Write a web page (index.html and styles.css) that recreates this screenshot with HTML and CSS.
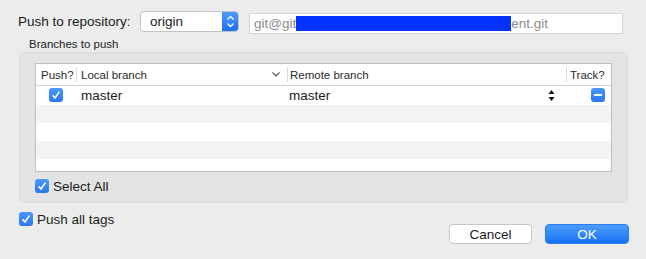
FILE: index.html
```html
<!doctype html>
<html>
	<head>
		<title>Push</title>
		<link rel="stylesheet" href="styles.css">
	</head>
	<body>
		<div class="dialog">
			<div class="repo-row">
				<span class="repo-label">Push to repository:</span>
				<div class="popup">
					<span class="popup-value">origin</span>
					<span class="popup-stepper">
						<svg width="17" height="21" viewBox="0 0 17 21"><polyline points="5.5,8.5 8.5,5.5 11.5,8.5" fill="none" stroke="white" stroke-width="1.3"/><polyline points="5.5,12.5 8.5,15.5 11.5,12.5" fill="none" stroke="white" stroke-width="1.3"/></svg>
					</span>
				</div>
				<div class="url-field"><span>git@git</span><span class="redact"></span><span>ent.git</span></div>
			</div>

			<div class="group-title">Branches to push</div>

			<div class="group">
				<div class="branch-table">
					<div class="thead">
						<div class="col col-push">Push?</div>
						<div class="col col-local">Local branch
							<svg class="sort" width="8" height="5" viewBox="0 0 8 5"><polyline points="0.5,0.5 4,4 7.5,0.5" fill="none" stroke="#555" stroke-width="1.1"/></svg>
						</div>
						<div class="col col-remote">Remote branch</div>
						<div class="col col-track">Track?</div>
					</div>
					<div class="tbody">
						<div class="row">
							<div class="col col-push"><span class="checkbox"><svg width="14" height="14" viewBox="0 0 14 14"><polyline points="3.6,7.4 6,10 10.4,3.6" fill="none" stroke="white" stroke-width="1.6"/></svg></span></div>
							<div class="col col-local">master</div>
							<div class="col col-remote">master
								<svg class="updown" width="7" height="13" viewBox="0 0 7 13"><polygon points="3.5,1 6.5,5 0.5,5" fill="#111"/><polygon points="3.5,12 6.5,8 0.5,8" fill="#111"/></svg>
							</div>
							<div class="col col-track"><span class="minus"></span></div>
						</div>
						<div class="row alt"></div>
						<div class="row"></div>
						<div class="row alt"></div>
						<div class="row"></div>
					</div>
				</div>
				<div class="check-row">
					<span class="checkbox"><svg width="14" height="14" viewBox="0 0 14 14"><polyline points="3.6,7.4 6,10 10.4,3.6" fill="none" stroke="white" stroke-width="1.6"/></svg></span>
					<span>Select All</span>
				</div>
			</div>

			<div class="footer">
				<div class="check-row tags">
					<span class="checkbox"><svg width="14" height="14" viewBox="0 0 14 14"><polyline points="3.6,7.4 6,10 10.4,3.6" fill="none" stroke="white" stroke-width="1.6"/></svg></span>
					<span>Push all tags</span>
				</div>
				<div class="buttons">
					<button class="btn">Cancel</button>
					<button class="btn btn-default">OK</button>
				</div>
			</div>
		</div>
	</body>
</html>
```

FILE: styles.css
```css
body {
	margin: 0;
	background: #ececec;
	font-family: "Liberation Sans", Arial, Helvetica, sans-serif;
	font-size: 13px;
	color: #1b1b1b;
}

.dialog {
	width: 611px;
	height: 259px;
	padding: 0 17px 0 18px;
	overflow: hidden;
}

/* repository line */

.repo-row {
	display: flex;
	align-items: flex-start;
	margin-top: 11px;
	height: 23px;
}

.repo-label {
	width: 122px;
	line-height: 21px;
	font-size: 13.5px;
}

.popup {
	display: flex;
	width: 99px;
	height: 21px;
	box-sizing: border-box;
	background: white;
	border: 1px solid #c4c4c4;
	border-radius: 4px;
	overflow: hidden;
}

.popup-value {
	flex: 1;
	padding-left: 9px;
	line-height: 19px;
	font-size: 13.5px;
}

.popup-stepper {
	width: 17px;
	margin: -1px -1px -1px 0;
	background: linear-gradient(#4f9cfb, #1a6ff2);
}

.url-field {
	display: flex;
	align-items: center;
	margin: 2px 0 0 10px;
	width: 374px;
	height: 21px;
	box-sizing: border-box;
	padding-left: 4px;
	background: white;
	border: 1px solid #d4d4d4;
	color: #8b8b8b;
	font-size: 13.5px;
}

.redact {
	display: inline-block;
	width: 215px;
	height: 15px;
	background: #0433ff;
}

/* group box */

.group-title {
	margin-left: 11px;
	padding-top: 3px;
	height: 15px;
	line-height: 15px;
	font-size: 11.5px;
}

.group {
	margin-left: 1px;
	width: 609px;
	height: 151px;
	box-sizing: border-box;
	padding: 10px 15px 0 15px;
	background: #e3e3e3;
	border: 1px solid #dcdcdc;
	border-radius: 5px;
}

.branch-table {
	width: 577px;
	box-sizing: border-box;
	background: white;
	border: 1px solid #bfbfbf;
}

.thead {
	display: flex;
	height: 21px;
	border-bottom: 1px solid #d6d6d6;
	font-size: 11.5px;
	line-height: 22px;
	color: #2a2a2a;
}

.thead .col + .col {
	border-left: 1px solid #dadada;
	margin: 3px 0;
	line-height: 16px;
}

.col {
	box-sizing: border-box;
}

.col-push {
	width: 40px;
	padding-left: 5px;
}

.col-local {
	display: flex;
	justify-content: space-between;
	align-items: center;
	width: 211px;
	padding: 0 7px 0 4px;
}

.col-remote {
	display: flex;
	justify-content: space-between;
	align-items: center;
	width: 279px;
	padding: 0 11px 0 2px;
}

.col-track {
	flex: 1;
	padding-left: 3px;
}

.tbody {
	height: 85px;
	overflow: hidden;
}

.row {
	display: flex;
	height: 18px;
	line-height: 18px;
}

.row:first-child {
	height: 19px;
	line-height: 19px;
	font-size: 13.5px;
}

.row.alt {
	background: #f3f3f3;
}

.row .col-push {
	padding: 2px 0 0 13px;
}

.row .col-local {
	padding-left: 5px;
}

.row .col-remote {
	padding-left: 2px;
}

.row .col-track {
	padding: 2px 0 0 25px;
}

.checkbox {
	display: inline-block;
	width: 14px;
	height: 14px;
	border-radius: 3px;
	background: linear-gradient(#4a98fa, #2a78f2);
	vertical-align: top;
}

.checkbox svg {
	display: block;
}

.minus {
	display: block;
	position: relative;
	width: 14px;
	height: 14px;
	border-radius: 3px;
	background: linear-gradient(#4a98fa, #2a78f2);
}

.minus::after {
	content: "";
	position: absolute;
	left: 3px;
	top: 6px;
	width: 8px;
	height: 2px;
	background: white;
}

.check-row {
	display: flex;
	align-items: center;
	gap: 4px;
	margin-top: 7px;
	height: 14px;
	font-size: 13.5px;
}

/* bottom line */

.footer {
	display: flex;
	justify-content: space-between;
	align-items: flex-start;
	margin-left: 1px;
}

.check-row.tags {
	margin-top: 9px;
}

.buttons {
	display: flex;
	gap: 13px;
	margin-top: 21px;
}

.btn {
	width: 83px;
	height: 20px;
	padding: 0;
	background: white;
	border: 1px solid #c6c6c6;
	border-radius: 4px;
	font-family: "Liberation Sans", Arial, Helvetica, sans-serif;
	font-size: 13.5px;
	color: #1b1b1b;
}

.btn-default {
	width: 84px;
	background: linear-gradient(#4e9dfc, #1672f5);
	border-color: #2d7cf0;
	color: white;
}
```
